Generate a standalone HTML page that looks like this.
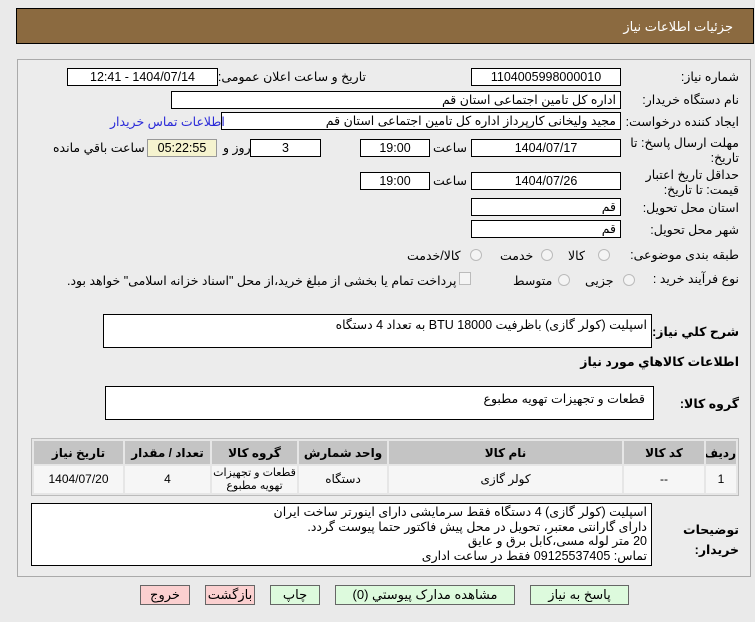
<!DOCTYPE html>
<html><head><meta charset="utf-8"><style>
*{box-sizing:border-box}
body{margin:0;width:755px;height:622px;background:#eaeaea;font-family:"Liberation Sans","DejaVu Sans",sans-serif;font-size:12px;color:#000;position:relative;overflow:hidden;direction:rtl}
.a{position:absolute}
.hdr{left:16px;top:8px;width:738px;height:36px;background:#8b6a40;border:1px solid #000}
.hdr span{position:absolute;right:20px;top:10px;color:#fff;font-size:13px}
.panel{left:17px;top:59px;width:734px;height:518px;border:1px solid #aaa;background:#ececec}
.f{position:absolute;background:#fff;border:1px solid #000;height:18px;font-size:12.5px;line-height:16px;padding:0 4px;white-space:nowrap}
.c{text-align:center}
.l{position:absolute;font-size:12.5px;white-space:nowrap;line-height:15px}
.b{font-weight:bold}
.rad{position:absolute;width:12px;height:12px;border:1px solid #bbb;border-radius:50%;background:#f4f4f4}
table{border-collapse:separate;border-spacing:2px;font-size:12px;table-layout:fixed}
td,th{text-align:center;padding:0;overflow:hidden}
th{background:#c4c4c4;height:23px}
td{background:#f6f6f6;height:27px;line-height:13px}
.btn{position:absolute;top:585px;height:20px;border:1px solid #666;font-size:13px;text-align:center;line-height:18px;background:#ddfadd}
</style></head><body>
<div class="a hdr"><span>جزئیات اطلاعات نیاز</span></div>
<div class="a panel"></div>

<div class="l" style="right:16px;top:70px">شماره نیاز:</div>
<div class="f c" style="left:471px;top:68px;width:150px">1104005998000010</div>
<div class="l" style="right:389px;top:70px">تاریخ و ساعت اعلان عمومی:</div>
<div class="f c" style="left:67px;top:68px;width:151px">1404/07/14 - 12:41</div>

<div class="l" style="right:16px;top:93px">نام دستگاه خریدار:</div>
<div class="f" style="left:171px;top:91px;width:450px">اداره کل تامین اجتماعی استان قم</div>

<div class="l" style="right:16px;top:115px">ایجاد کننده درخواست:</div>
<div class="f" style="left:221px;top:112px;width:400px">مجید ولیخانی کارپرداز اداره کل تامین اجتماعی استان قم</div>
<div class="l" style="left:110px;top:115px;color:#2a2ad8">اطلاعات تماس خریدار</div>

<div class="l" style="right:16px;top:136px;line-height:15px">مهلت ارسال پاسخ: تا<br>تاریخ:</div>
<div class="f c" style="left:471px;top:139px;width:150px">1404/07/17</div>
<div class="l" style="left:433px;top:141px">ساعت</div>
<div class="f c" style="left:360px;top:139px;width:70px">19:00</div>
<div class="f c" style="left:250px;top:139px;width:71px">3</div>
<div class="l" style="left:223px;top:141px">روز و</div>
<div class="f c" style="left:147px;top:139px;width:70px;background:#f5f3cf;border-color:#999">05:22:55</div>
<div class="l" style="left:53px;top:141px">ساعت باقي مانده</div>

<div class="l" style="right:16px;top:168px;line-height:15px">حداقل تاریخ اعتبار<br>قیمت: تا تاریخ:</div>
<div class="f c" style="left:471px;top:172px;width:150px">1404/07/26</div>
<div class="l" style="left:433px;top:174px">ساعت</div>
<div class="f c" style="left:360px;top:172px;width:70px">19:00</div>

<div class="l" style="right:16px;top:201px">استان محل تحویل:</div>
<div class="f" style="left:471px;top:198px;width:150px">قم</div>
<div class="l" style="right:16px;top:223px">شهر محل تحویل:</div>
<div class="f" style="left:471px;top:220px;width:150px">قم</div>

<div class="l" style="right:16px;top:248px">طبقه بندی موضوعی:</div>
<div class="rad" style="left:598px;top:249px"></div><div class="l" style="left:568px;top:249px">کالا</div>
<div class="rad" style="left:541px;top:249px"></div><div class="l" style="left:500px;top:249px">خدمت</div>
<div class="rad" style="left:470px;top:249px"></div><div class="l" style="left:407px;top:249px">کالا/خدمت</div>

<div class="l" style="right:16px;top:272px">نوع فرآیند خرید :</div>
<div class="rad" style="left:623px;top:274px"></div><div class="l" style="left:585px;top:274px">جزیی</div>
<div class="rad" style="left:558px;top:274px"></div><div class="l" style="left:513px;top:274px">متوسط</div>
<div class="a" style="left:459px;top:272px;width:12px;height:13px;border:1px solid #bbb;background:#f4f4f4"></div>
<div class="l" style="left:67px;top:274px">پرداخت تمام یا بخشی از مبلغ خرید،از محل "اسناد خزانه اسلامی" خواهد بود.</div>

<div class="l b" style="right:16px;top:325px">شرح کلي نیاز:</div>
<div class="f" style="left:103px;top:314px;width:549px;height:34px;padding-top:2px">اسپلیت (کولر گازی) باظرفیت BTU 18000 به تعداد 4 دستگاه</div>

<div class="l b" style="right:16px;top:355px">اطلاعات کالاهاي مورد نیاز</div>

<div class="l b" style="right:16px;top:397px">گروه کالا:</div>
<div class="f" style="left:105px;top:386px;width:549px;height:34px;padding:4px 8px">قطعات و تجهیزات تهویه مطبوع</div>

<div class="a" style="left:31px;top:438px;width:708px;height:58px;border:1px solid #bbb;background:#e6e6e6">
<table style="width:706px;margin:0">
<colgroup><col style="width:30px"><col style="width:80px"><col style="width:233px"><col style="width:88px"><col style="width:85px"><col style="width:85px"><col></colgroup>
<tr><th>ردیف</th><th>کد کالا</th><th>نام کالا</th><th>واحد شمارش</th><th>گروه کالا</th><th>تعداد / مقدار</th><th>تاریخ نیاز</th></tr>
<tr><td>1</td><td>--</td><td>کولر گازی</td><td>دستگاه</td><td style="font-size:11px;white-space:nowrap">قطعات و تجهیزات<br>تهویه مطبوع</td><td>4</td><td>1404/07/20</td></tr>
</table></div>

<div class="l b" style="right:16px;top:520px;line-height:20px">توضیحات<br>خریدار:</div>
<div class="f" style="left:31px;top:503px;width:621px;height:63px;line-height:14.5px;padding-top:1px;white-space:normal">اسپلیت (کولر گازی) 4 دستگاه فقط سرمایشی دارای اینورتر ساخت ایران<br>دارای گارانتی معتبر، تحویل در محل پیش فاکتور حتما پیوست گردد.<br>20 متر لوله مسی،کابل برق و عایق<br>تماس: 09125537405 فقط در ساعت اداری</div>

<div class="btn" style="left:530px;width:99px">پاسخ به نیاز</div>
<div class="btn" style="left:335px;width:180px">مشاهده مدارک پیوستي (0)</div>
<div class="btn" style="left:270px;width:50px">چاپ</div>
<div class="btn" style="left:205px;width:50px;background:#fbd0d0">بازگشت</div>
<div class="btn" style="left:140px;width:50px;background:#fbd0d0">خروج</div>
</body></html>
